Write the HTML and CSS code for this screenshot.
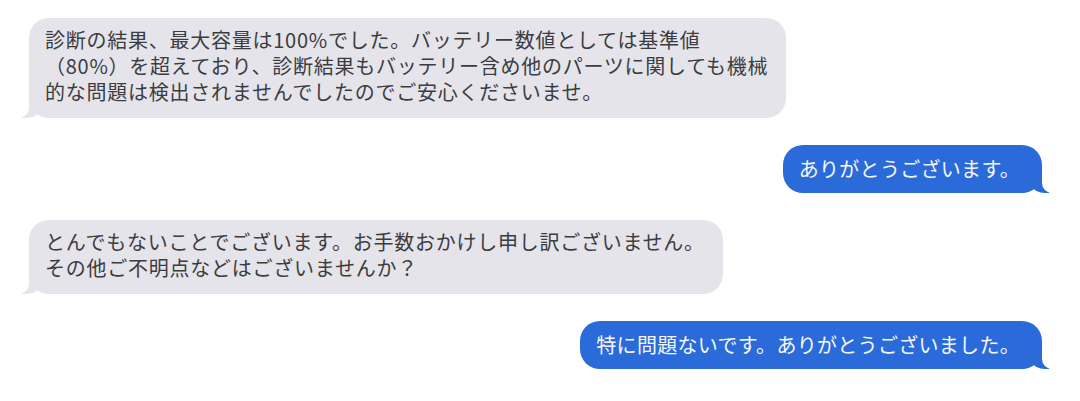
FILE: index.html
```html
<!DOCTYPE html>
<html lang="ja">
<head>
  <meta charset="utf-8">
  <title>メッセージ</title>
  <link rel="stylesheet" href="styles.css">
</head>
<body>
  <div class="chat">
    <div class="row in">
      <div class="bubble in">診断の結果、最大容量は100%でした。バッテリー数値としては基準値<br>（80%）を超えており、診断結果もバッテリー含め他のパーツに関しても機械<br>的な問題は検出されませんでしたのでご安心くださいませ。</div>
    </div>
    <div class="row out">
      <div class="bubble out">ありがとうございます。</div>
    </div>
    <div class="row in">
      <div class="bubble in">とんでもないことでございます。お手数おかけし申し訳ございません。<br>その他ご不明点などはございませんか？</div>
    </div>
    <div class="row out">
      <div class="bubble out">特に問題ないです。ありがとうございました。</div>
    </div>
  </div>
</body>
</html>
```

FILE: styles.css
```css
body {
  margin: 0;
  background: #fff;
  font-family: "Noto Sans CJK JP", "Noto Sans", sans-serif;
}
.chat {
  display: flex;
  flex-direction: column;
  gap: 27px;
  padding: 18px 38px 0 29px;
}
.row {
  display: flex;
}
.row.in {
  justify-content: flex-start;
}
.row.out {
  justify-content: flex-end;
}
.bubble {
  position: relative;
  z-index: 0;
  font-size: 20px;
  line-height: 26px;
  border-radius: 20px;
  white-space: nowrap;
}
.bubble.in {
  background: #e4e4ea;
  color: #3c3c41;
  letter-spacing: 0.75px;
  padding: 9px 18px 13px 16px;
}
.bubble.out {
  background: #2b6bd9;
  color: #f5f7fc;
  letter-spacing: 0.3px;
  padding: 11px 22px 11px 16px;
}
.bubble::before,
.bubble::after {
  content: "";
  position: absolute;
  bottom: 0;
  height: 25px;
  z-index: -1;
}
.bubble.in::before {
  left: -7px;
  width: 20px;
  background: #e4e4ea;
  border-bottom-right-radius: 16px 14px;
}
.bubble.in::after {
  left: -26px;
  width: 26px;
  background: #fff;
  border-bottom-right-radius: 10px;
}
.bubble.out::before {
  right: -7px;
  width: 20px;
  background: #2b6bd9;
  border-bottom-left-radius: 16px 14px;
}
.bubble.out::after {
  right: -26px;
  width: 26px;
  background: #fff;
  border-bottom-left-radius: 10px;
}
```
